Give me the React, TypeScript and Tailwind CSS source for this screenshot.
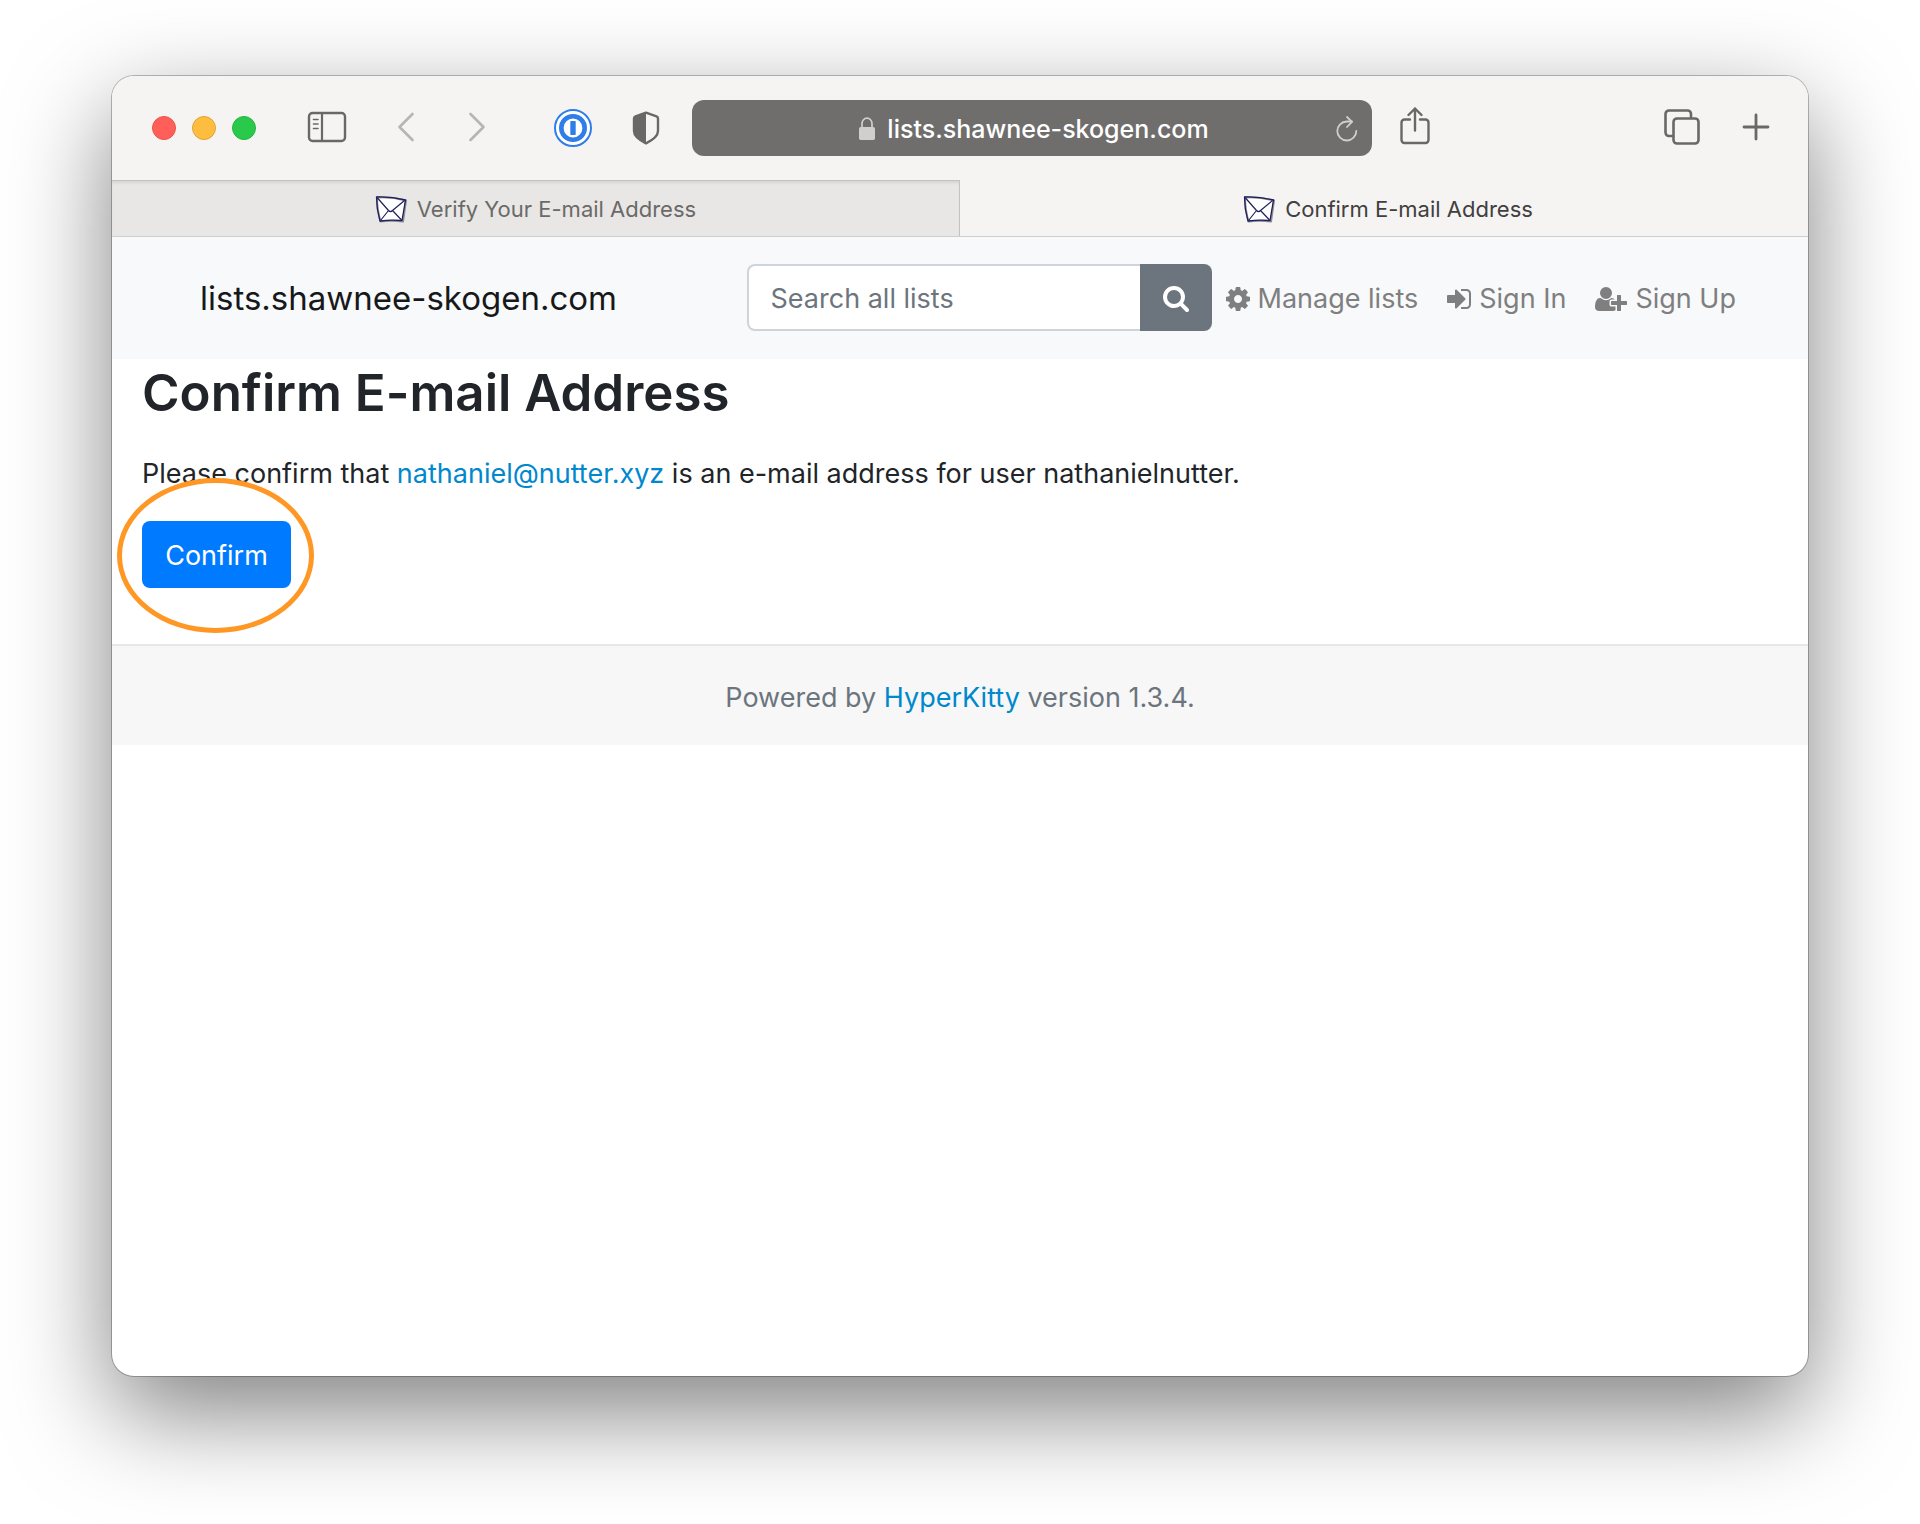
import React from 'react';

function SidebarIcon() {
  return (
    <svg width="40" height="34" viewBox="0 0 40 34" fill="none" stroke="currentColor" aria-hidden="true">
      <rect x="2" y="2" width="36" height="28" rx="3.5" strokeWidth="2.4" />
      <path d="M15 2v28" strokeWidth="2.2" />
      <path d="M6.5 8.500h4.500M6.500 13h4.500M6.500 17.500h4.500" strokeWidth="1.600" strokeLinecap="round" />
    </svg>
  );
}

function Chevron({ flip = false }: { flip?: boolean }) {
  return (
    <svg width="18" height="32" viewBox="0 0 18 32" fill="none" stroke="currentColor" strokeWidth="2.6" strokeLinecap="round" strokeLinejoin="round" aria-hidden="true">
      <path d={flip ? 'M2.500 2L15.500 15L2.500 28' : 'M15.500 2L2.500 15L15.500 28'} />
    </svg>
  );
}

function OnePasswordIcon() {
  return (
    <svg width="38" height="38" viewBox="0 0 38 38" fill="none" stroke="#2f7de9" aria-hidden="true">
      <circle cx="19" cy="19" r="18" strokeWidth="2" fill="#fff" />
      <circle cx="19" cy="19" r="11.700" strokeWidth="4.600" />
      <rect x="16.300" y="12" width="5.400" height="14" rx="0.800" fill="#2f7de9" stroke="none" />
    </svg>
  );
}

function ShieldIcon() {
  return (
    <svg width="28" height="34" viewBox="0 0 28 34" fill="none" aria-hidden="true">
      <path d="M14 1.700L24.500 5.300Q26 5.900 26 7.500V20Q26 26.500 14 32.300Q2 26.500 2 20V7.500Q2 5.900 3.500 5.300Z" stroke="currentColor" strokeWidth="2.400" strokeLinejoin="round" />
      <path d="M14 1.700L3.500 5.300Q2 5.900 2 7.500V20Q2 26.500 14 32.300Z" fill="currentColor" />
    </svg>
  );
}

function LockIcon() {
  return (
    <svg width="16" height="24" viewBox="0 0 16 24" fill="none" aria-hidden="true">
      <path d="M3 11V6.500a5 5.300 0 0 1 10 0V11" stroke="#cfcfce" strokeWidth="1.700" />
      <rect x="0" y="10" width="16" height="13" rx="1.800" fill="#cfcfce" />
    </svg>
  );
}

function ReloadIcon() {
  return (
    <svg width="22" height="26" viewBox="0 0 22 26" fill="none" stroke="#cfcfce" strokeWidth="1.800" strokeLinecap="round" strokeLinejoin="round" aria-hidden="true">
      <path d="M20.300 15A9.500 9.500 0 1 1 10.800 5.500H16" />
      <path d="M11 1L16 5.800L11 11" />
    </svg>
  );
}

function ShareIcon() {
  return (
    <svg width="30" height="42" viewBox="0 0 30 42" fill="none" stroke="currentColor" strokeWidth="2.400" strokeLinecap="round" strokeLinejoin="round" aria-hidden="true">
      <path d="M10 12.500H4.500A3 3 0 0 0 1.500 15.500V33A3 3 0 0 0 4.500 36H25.500A3 3 0 0 0 28.500 33V15.500A3 3 0 0 0 25.500 12.500H20" />
      <path d="M15 23.500V1.500M8.500 8L15 1.500L21.500 8" />
    </svg>
  );
}

function TabsIcon() {
  return (
    <svg width="36" height="38" viewBox="0 0 36 38" fill="none" stroke="currentColor" strokeWidth="2.600" strokeLinecap="round" strokeLinejoin="round" aria-hidden="true">
      <rect x="9.500" y="9.500" width="25" height="25" rx="3.500" />
      <path d="M27 8V5A3.500 3.500 0 0 0 23.500 1.500H5A3.500 3.500 0 0 0 1.500 5V23.500A3.500 3.500 0 0 0 5 27H8" />
    </svg>
  );
}

function PlusIcon() {
  return (
    <svg width="28" height="30" viewBox="0 0 28 30" fill="none" stroke="currentColor" strokeWidth="2.800" strokeLinecap="round" aria-hidden="true">
      <path d="M14 2v24M2 14h24" />
    </svg>
  );
}

function EnvelopeIcon() {
  return (
    <svg className="shrink-0" width="32" height="28" viewBox="0 0 32 28" fill="none" aria-hidden="true">
      <path d="M2 2.500Q16 1.500 31 5.500L28 26.500Q16 25 5.500 26.500Q2 14 2 2.500Z" fill="#fff" stroke="#8d8d91" strokeWidth="2" strokeLinejoin="round" />
      <path d="M1.500 2Q16 1.500 30.500 5L27 25.500Q16 24.500 5 26Q1.500 14 1.500 2Z" stroke="#20205f" strokeWidth="1.300" strokeLinejoin="round" />
      <path d="M2.500 3L13.500 15.500Q15.500 17.500 17.500 15.500L29.500 5.500M5.500 25.500L13.500 15.500M26.500 25L17.500 15.500" stroke="#20205f" strokeWidth="1.200" />
    </svg>
  );
}

function SearchIcon() {
  return (
    <svg width="26" height="26" viewBox="64 128 1664 1664" fill="currentColor" aria-hidden="true">
      <path d="M1216 832q0-185-131.500-316.500t-316.500-131.500-316.500 131.500-131.500 316.500 131.500 316.500 316.500 131.500 316.500-131.500 131.500-316.500zm512 832q0 52-38 90t-90 38q-54 0-90-38l-343-342q-179 124-399 124-143 0-273.500-55.500t-225-150-150-225-55.500-273.500 55.500-273.500 150-225 225-150 273.500-55.500 273.500 55.500 225 150 150 225 55.500 273.500q0 220-124 399l343 343q37 37 37 90z" />
    </svg>
  );
}

function CogIcon() {
  return (
    <svg width="24" height="28" viewBox="128 0 1536 1792" fill="currentColor" aria-hidden="true">
      <path d="M1152 896q0-106-75-181t-181-75-181 75-75 181 75 181 181 75 181-75 75-181zm512-109v222q0 12-8 23t-20 13l-185 28q-19 54-39 91 35 50 107 138 10 12 10 25t-9 23q-27 37-99 108t-94 71q-12 0-26-9l-138-108q-44 23-91 38-16 136-29 186-7 28-36 28h-222q-14 0-24.500-8.500t-11.500-21.500l-28-184q-49-16-90-37l-141 107q-10 9-25 9-14 0-25-11-126-114-165-168-7-10-7-23 0-12 8-23 15-21 51-66.500t54-70.500q-27-50-41-99l-183-27q-13-2-21-12.500t-8-23.500v-222q0-12 8-23t19-13l186-28q14-46 39-92-40-57-107-138-10-12-10-24 0-10 9-23 26-36 98.500-107.500t94.500-71.500q13 0 26 10l138 107q44-23 91-38 16-136 29-186 7-28 36-28h222q14 0 24.500 8.500t11.500 21.500l28 184q49 16 90 37l142-107q9-9 24-9 13 0 25 10 129 119 165 170 7 8 7 22 0 12-8 23-15 21-51 66.500t-54 70.500q26 50 41 98l183 28q13 2 21 12.500t8 23.500z" />
    </svg>
  );
}

function SignInIcon() {
  return (
    <svg width="24" height="28" viewBox="128 0 1536 1792" fill="currentColor" aria-hidden="true">
      <path d="M1312 896q0 26-19 45l-544 544q-19 19-45 19t-45-19-19-45v-288h-448q-26 0-45-19t-19-45v-384q0-26 19-45t45-19h448v-288q0-26 19-45t45-19 45 19l544 544q19 19 19 45zm352-352v704q0 119-84.500 203.500t-203.500 84.500h-320q-13 0-22.500-9.500t-9.500-22.500q0-4-1-20t-.5-26.500 3-23.500 10-19.500 20.500-6.500h320q66 0 113-47t47-113v-704q0-66-47-113t-113-47h-312l-11.500-1-11.500-3-8-5.500-7-9-2-13.500q0-4-1-20t-.5-26.500 3-23.500 10-19.500 20.500-6.500h320q119 0 203.500 84.500t84.500 203.500z" />
    </svg>
  );
}

function UserPlusIcon() {
  return (
    <svg width="32" height="28" viewBox="0 0 2048 1792" fill="currentColor" aria-hidden="true">
      <path d="M704 896q-159 0-271.500-112.500t-112.500-271.500 112.500-271.500 271.500-112.500 271.500 112.500 112.500 271.500-112.500 271.500-271.500 112.500zm960 128h352q13 0 22.500 9.500t9.500 22.500v192q0 13-9.500 22.500t-22.500 9.500h-352v352q0 13-9.500 22.500t-22.500 9.500h-192q-13 0-22.500-9.500t-9.500-22.500v-352h-352q-13 0-22.500-9.500t-9.500-22.500v-192q0-13 9.500-22.500t22.500-9.500h352v-352q0-13 9.500-22.500t22.500-9.500h192q13 0 22.500 9.500t9.500 22.500v352zm-736 224q0 52 38 90t90 38h256v238q-68 50-171 50h-874q-121 0-194-69t-73-190q0-53 3.500-103.500t14-109 26.500-108.500 43-97.500 62-81 85.500-53.500 111.500-20q19 0 39 17 79 61 154.500 91.500t164.500 30.500 164.500-30.500 154.500-91.500q20-17 39-17 132 0 217 96h-223q-52 0-90 38t-38 90v192z" />
    </svg>
  );
}

function Toolbar() {
  return (
    <div className="flex h-[104px] items-center pr-[38px] pl-10 text-[#696866]">
      <div className="flex gap-4">
        <button aria-label="Close" className="size-6 rounded-full border border-[#e8534c] bg-[#ff5f58]" />
        <button aria-label="Minimize" className="size-6 rounded-full border border-[#e0a33a] bg-[#ffbd3f]" />
        <button aria-label="Zoom" className="size-6 rounded-full border border-[#24b642] bg-[#29c94b]" />
      </div>
      <button aria-label="Show sidebar" className="ml-[51px]"><SidebarIcon /></button>
      <button aria-label="Back" className="ml-[50px] text-[#b6b5b3]"><Chevron /></button>
      <button aria-label="Forward" className="ml-[53px] text-[#b6b5b3]"><Chevron flip /></button>
      <button aria-label="1Password" className="ml-[68px]"><OnePasswordIcon /></button>
      <button aria-label="Privacy report" className="ml-10"><ShieldIcon /></button>
      <div className="ml-8 flex h-14 w-[680px] items-center rounded-xl bg-[#6f6e6c] pt-0.5 pr-3.5">
        <div className="flex flex-1 items-center justify-center gap-3 pl-10">
          <LockIcon />
          <span className="text-[25px] leading-8 font-medium text-white">lists.shawnee-skogen.com</span>
        </div>
        <button aria-label="Reload"><ReloadIcon /></button>
      </div>
      <button aria-label="Share" className="ml-7"><ShareIcon /></button>
      <button aria-label="Show all tabs" className="ml-auto"><TabsIcon /></button>
      <button aria-label="New tab" className="ml-[42px]"><PlusIcon /></button>
    </div>
  );
}

function TabBar() {
  return (
    <div role="tablist" className="grid h-[57px] grid-cols-2 border-b border-[#cfcfd1]">
      <button role="tab" aria-selected={false} className="flex items-center justify-center gap-2.5 border-t border-r border-[#c3c2c0] bg-[#e8e7e5] text-[22px] text-[#6b6a68] shadow-[inset_0_3px_3px_-1px_rgba(0,0,0,0.08)]">
        <EnvelopeIcon />
        <span className="pt-0.5">Verify Your E-mail Address</span>
      </button>
      <button role="tab" aria-selected={true} className="flex items-center justify-center gap-2.5 pt-px pl-2 text-[22px] text-[#41403f]">
        <EnvelopeIcon />
        <span className="pt-0.5">Confirm E-mail Address</span>
      </button>
    </div>
  );
}

function SiteNav() {
  return (
    <nav className="flex h-[122px] items-center bg-[#f8f9fb] pr-[72px] pb-0.5 pl-[88px]">
      <a href="#" className="pt-0.5 text-[33px] leading-10 text-[#17181a]">lists.shawnee-skogen.com</a>
      <form className="ml-auto flex h-[67px]" onSubmit={(e) => e.preventDefault()}>
        <input
          type="search"
          aria-label="Search all lists"
          placeholder="Search all lists"
          className="w-[393px] rounded-l-lg border-2 border-r-0 border-[#ced4da] bg-white px-[22px] pt-1 text-[27px] text-[#495057] outline-none placeholder:text-[#6c757d]"
        />
        <button aria-label="Search" className="flex w-[72px] items-center justify-center rounded-r-lg bg-[#6c757d] pt-1 text-white">
          <SearchIcon />
        </button>
      </form>
      <ul className="ml-3.5 flex items-center gap-[29px] pt-1 text-[27px] leading-8 text-[#7f7f7f]">
        <li><a href="#" className="flex items-center gap-2"><CogIcon />Manage lists</a></li>
        <li><a href="#" className="flex items-center gap-2"><SignInIcon />Sign In</a></li>
        <li><a href="#" className="flex items-center gap-2"><UserPlusIcon />Sign Up</a></li>
      </ul>
    </nav>
  );
}

export default function App() {
  return (
    <div className="flex min-h-screen flex-col bg-white px-28 pt-19 pb-37 font-['Inter','Liberation_Sans',sans-serif]">
      <div className="flex flex-1 flex-col overflow-hidden rounded-[22px] bg-white shadow-[0_0_0_1px_rgba(0,0,0,0.25),0_36px_100px_rgba(0,0,0,0.5)]">
        <header className="bg-[#f5f4f2]">
          <Toolbar />
          <TabBar />
        </header>
        <SiteNav />
        <main className="px-[30px] text-[27px] leading-10 text-[#212529]">
          <h1 className="text-[51px] leading-[67px] font-semibold">Confirm E-mail Address</h1>
          <p className="mt-7">
            Please confirm that <a href="mailto:nathaniel@nutter.xyz" className="text-[#0088cc]">nathaniel@nutter.xyz</a> is an e-mail address for user nathanielnutter.
          </p>
          <div className="relative mt-[27px] mb-14 w-fit">
            <button className="flex h-[67px] w-[149px] items-center justify-center rounded-lg bg-[#007bff] pt-0.5 text-white">Confirm</button>
            <div className="pointer-events-none absolute -top-[43px] -right-[23px] -bottom-[45px] -left-[25px] rounded-[50%] border-5 border-[#ff9724]" />
          </div>
        </main>
        <footer className="border-t-2 border-[#e7e7e7] bg-[#f7f7f7] pt-8 pb-[27px] text-center text-[27px] leading-10 text-[#6c757d]">
          Powered by <a href="#" className="text-[#0088cc]">HyperKitty</a> version 1.3.4.
        </footer>
      </div>
    </div>
  );
}
